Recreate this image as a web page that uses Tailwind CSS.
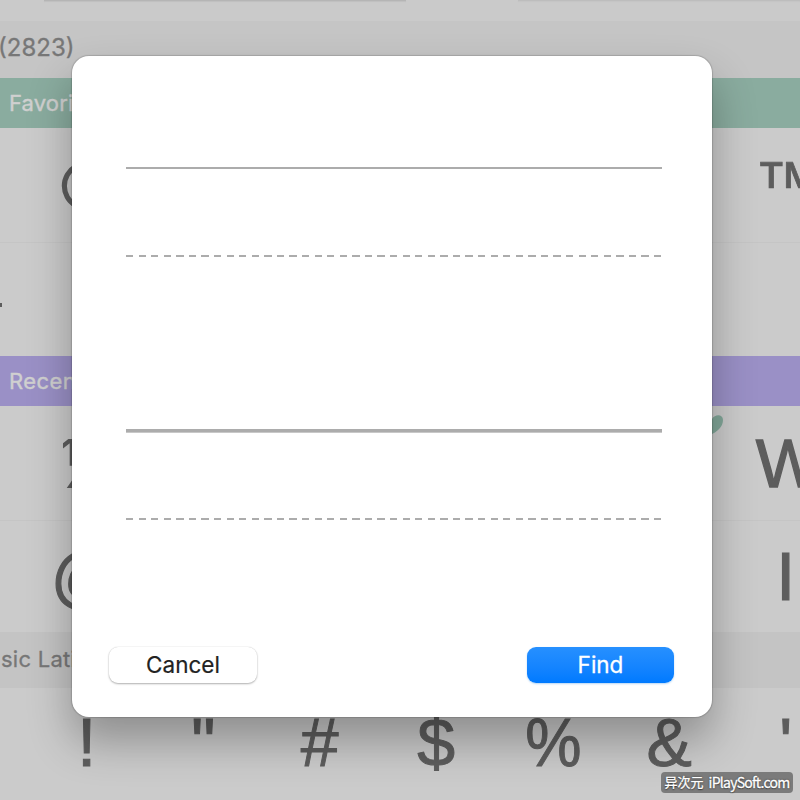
<!DOCTYPE html>
<html lang="en"><head><meta charset="utf-8"><title>Find symbol</title>
<script src="https://cdn.jsdelivr.net/npm/@tailwindcss/browser@4"></script></head>
<body class="relative h-[800px] w-[800px] overflow-hidden bg-[#cbcbcb] font-['Inter',sans-serif]">
<main class="flex h-[800px] w-[800px] flex-col overflow-hidden">
  <div class="flex h-[21px] shrink-0 items-start justify-between bg-[#cacaca]">
    <div class="ml-[44px] h-px w-[362px] bg-[#b5b5b5] shadow-[0_1px_1px_#bdbdbd]"></div>
    <div class="h-px w-[282px] bg-[#bdbdbd] shadow-[0_1px_1px_#c3c3c3]"></div>
  </div>
  <div class="flex h-[57px] shrink-0 items-center bg-[#c5c5c5] text-[24px] text-[#777] whitespace-nowrap [-webkit-text-stroke:0.3px_#777]"><span class="-ml-[2px] w-[78px] pb-[4px]">(2823)</span></div>
  <div class="flex h-[50px] shrink-0 items-center bg-[#8aac9f] pl-[9px] text-[22px] text-[#d0d0d0] [-webkit-text-stroke:0.4px_#d0d0d0]"><span class="tracking-[0.15px]">Favorites</span></div>
  <div class="-ml-[88px] grid h-[115px] w-[932px] shrink-0 grid-cols-[repeat(8,116.5px)] items-center border-b border-[#c5c5c5] text-center font-['Liberation_Sans'] text-[68px] leading-none text-[#5d5d5d] [-webkit-text-stroke:1.3px_#5d5d5d]">
    <span></span><span class="[-webkit-text-stroke:2px_#5d5d5d]">©</span><span></span><span></span><span></span><span></span><span></span><span class="ml-[5px] [-webkit-text-stroke:0.8px_#5d5d5d]">™</span>
  </div>
  <div class="flex h-[113px] shrink-0 items-center bg-[#cbcbcb]"><div class="mt-[11px] h-[4px] w-[2px] bg-[#5d5d5d]"></div></div>
  <div class="flex h-[50px] shrink-0 items-center bg-[#9a90c6] pl-[9px] text-[22px] text-[#d0d0d0] [-webkit-text-stroke:0.4px_#d0d0d0]"><span class="tracking-[0.4px]">Recent</span></div>
  <div class="-ml-[88px] grid h-[115px] w-[932px] shrink-0 grid-cols-[repeat(8,116.5px)] items-center border-b border-[#c5c5c5] text-center font-['Liberation_Sans'] text-[68px] leading-none text-[#5d5d5d] [-webkit-text-stroke:1.3px_#5d5d5d]">
    <span></span><span class="ml-[5px] font-['Inter'] [-webkit-text-stroke:0px]">½</span><span></span><span></span><span></span><span></span><span></span><span class="ml-[4px]">W</span>
  </div>
  <div class="-ml-[88px] grid h-[111px] w-[932px] shrink-0 grid-cols-[repeat(8,116.5px)] items-center pb-[1px] text-center font-['Liberation_Sans'] text-[68px] leading-none text-[#5d5d5d] [-webkit-text-stroke:1.2px_#5d5d5d]">
    <span></span><span class="-ml-[3px]">@</span><span></span><span></span><span></span><span></span><span></span><span>I</span>
  </div>
  <div class="flex h-[56px] shrink-0 items-center bg-[#c4c4c4] pb-[2px] text-[22px] text-[#777] whitespace-nowrap [-webkit-text-stroke:0.3px_#777]"><span class="ml-[1px] tracking-[0.25px]">sic Latin</span></div>
  <div class="-ml-[88px] grid h-[112px] w-[932px] shrink-0 grid-cols-[repeat(8,116.5px)] items-center pb-[5px] text-center font-['Liberation_Sans'] text-[68px] leading-none text-[#5d5d5d] [-webkit-text-stroke:1px_#5d5d5d]">
    <span></span><span>!</span><span>"</span><span>#</span><span>$</span><span class="origin-center scale-x-93">%</span><span>&amp;</span><span>'</span>
  </div>
</main>
<svg class="absolute top-[415px] left-[700px] h-[20px] w-[24px]" viewBox="0 0 24 20"><path d="M10 20C4 14 1 10 1 6C1 0 9-1 12 4C15-1 23-1 23 5C23 12 17 17 10 20Z" fill="#82a799"/></svg>
<section class="absolute top-[56px] left-[72px] flex h-[661px] w-[640px] flex-col rounded-[17px] bg-white shadow-[0_0_1px_1px_rgba(0,0,0,0.15),0_24px_44px_rgba(0,0,0,0.30)]">
  <div class="ml-[54px] flex w-[536px] flex-col">
    <div class="mt-[111px] h-[2px] bg-[#acacac]"></div>
    <div class="mt-[86px] h-[2px] bg-[repeating-linear-gradient(90deg,#acacac_0px,#acacac_7.3px,transparent_7.3px,transparent_12.57px)]"></div>
    <div class="mt-[172px] box-content h-[3px] border-b border-[#c8c8c8] bg-[#acacac]"></div>
    <div class="mt-[85px] h-[2px] bg-[repeating-linear-gradient(90deg,#acacac_0px,#acacac_7.3px,transparent_7.3px,transparent_12.57px)]"></div>
  </div>
  <div class="mt-auto mb-[34px] flex justify-between pr-[38px] pl-[37px]">
    <button class="h-[36px] w-[148px] rounded-[9px] bg-white pb-[1px] text-[22.5px] leading-[33px] text-[#222] shadow-[0_0_1px_#c4c4c4,0_1px_2px_#b0b0b0] [-webkit-text-stroke:0.2px_#222]">Cancel</button>
    <button class="h-[36px] w-[147px] rounded-[9px] bg-linear-to-b from-[#2690ff] to-[#007aff] pb-[1px] text-[22.5px] leading-[33px] text-white shadow-[0_1px_2px_#b5d6f5] [-webkit-text-stroke:0.3px_#fff]">Find</button>
  </div>
</section>
<div class="absolute top-[772px] left-[661px] flex h-[21px] w-[132px] items-center justify-center gap-[5px] rounded-[4px] bg-[#7b7b7b] pb-[2px] font-['Noto_Sans_CJK_SC',sans-serif] text-[14px] leading-none font-normal whitespace-nowrap text-white [-webkit-text-stroke:0.3px_#fff] [text-shadow:0_0_2px_#333,0_1px_1px_#444]"><span class="text-[13px]">异次元</span><span class="tracking-[-0.75px]">iPlaySoft.com</span></div>
</body></html>
